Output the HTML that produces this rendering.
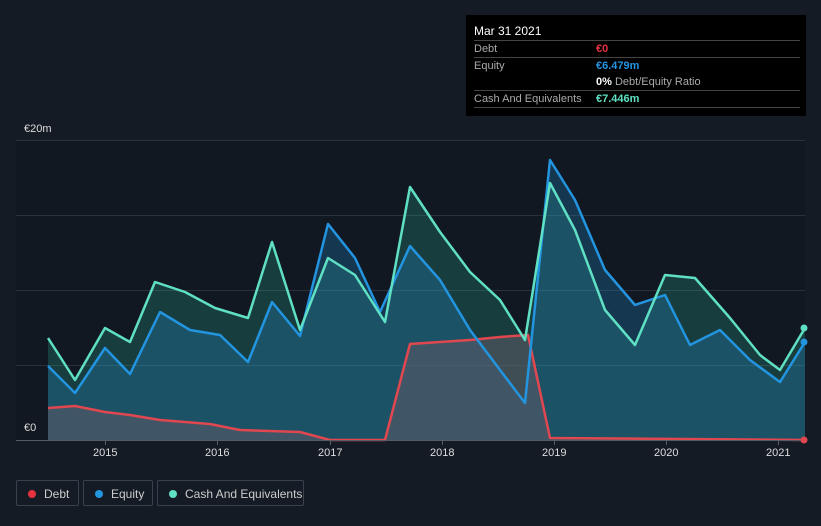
<!DOCTYPE html>
<html><head><style>
body{margin:0;width:821px;height:526px;background:#151b25;font-family:"Liberation Sans",sans-serif;overflow:hidden;position:relative}
.tt{position:absolute;left:466px;top:15px;width:340px;height:101px;background:#000;color:#fff;font-size:11px}
.tt .r{position:absolute;left:8px;right:6px;height:17px;border-top:1px solid #444;color:#aaa;line-height:17px}
.tt .v{position:absolute;left:122px;font-weight:bold}
.leg{position:absolute;top:480px;height:26px;border:1px solid #3a414c;border-radius:2px;color:#ccc;font-size:12px;line-height:26px;box-sizing:border-box;white-space:nowrap}
.leg i{position:absolute;left:11px;top:9px;width:8px;height:8px;border-radius:50%}
.leg span{position:absolute;left:27px;white-space:nowrap}
.ax{position:absolute;color:#ddd;font-size:11px}
</style></head><body>
<svg width="821" height="526" style="position:absolute;left:0;top:0">
<rect x="16" y="140" width="789" height="300" fill="#121821"/>
<g stroke="#2a313b" stroke-width="1"><line x1="16" y1="140.5" x2="805" y2="140.5"/><line x1="16" y1="215.5" x2="805" y2="215.5"/><line x1="16" y1="290.5" x2="805" y2="290.5"/><line x1="16" y1="365.5" x2="805" y2="365.5"/></g>
<polygon fill="#2ec4a8" fill-opacity="0.22" points="48,440 48,338 75,380 105,328 130,342 155,282 185,292 215,308 248,318 272,242 300,330 328,258 355,275 385,322 410,187 440,232 470,272 500,300 525,340 550,183 575,230 605,310 635,345 665,275 695,278 730,318 760,355 780,370 805,328 805,440"/>
<polygon fill="#2394df" fill-opacity="0.25" points="48,440 48,366 75,393 105,348 130,374 160,312 190,330 220,335 248,362 272,302 300,336 328,224 355,258 380,312 410,246 440,280 470,330 500,370 525,403 550,160 575,200 605,270 635,305 665,295 690,345 720,330 750,360 780,382 805,342 805,440"/>
<polygon fill="#5a5a66" fill-opacity="0.6" points="48,440 48,408 75,406 105,412 130,415 160,420 210,424 240,430 300,432 330,440 385,440 410,344 440,342 470,340 500,337 528,335 550,438 805,440"/>
<g fill="none" stroke-width="2.5" stroke-linejoin="round">
<polyline stroke="#e0474f" points="48,408 75,406 105,412 130,415 160,420 210,424 240,430 300,432 330,440 385,440 410,344 440,342 470,340 500,337 528,335 550,438 805,440"/>
<polyline stroke="#2394df" points="48,366 75,393 105,348 130,374 160,312 190,330 220,335 248,362 272,302 300,336 328,224 355,258 380,312 410,246 440,280 470,330 500,370 525,403 550,160 575,200 605,270 635,305 665,295 690,345 720,330 750,360 780,382 805,342"/>
<polyline stroke="#5fe0c4" points="48,338 75,380 105,328 130,342 155,282 185,292 215,308 248,318 272,242 300,330 328,258 355,275 385,322 410,187 440,232 470,272 500,300 525,340 550,183 575,230 605,310 635,345 665,275 695,278 730,318 760,355 780,370 805,328"/>
</g>
<line x1="16" y1="440.5" x2="805" y2="440.5" stroke="#555c66"/>
<g stroke="#555c66"><line x1="105.5" y1="440" x2="105.5" y2="445"/><line x1="217.5" y1="440" x2="217.5" y2="445"/><line x1="330.5" y1="440" x2="330.5" y2="445"/><line x1="442.5" y1="440" x2="442.5" y2="445"/><line x1="554.5" y1="440" x2="554.5" y2="445"/><line x1="666.5" y1="440" x2="666.5" y2="445"/><line x1="778.5" y1="440" x2="778.5" y2="445"/></g>
<circle cx="804" cy="328" r="3.5" fill="#5fe0c4"/><circle cx="804" cy="342" r="3.5" fill="#2394df"/><circle cx="804" cy="440" r="3.5" fill="#e0474f"/>
</svg>
<div class="ax" style="left:24px;top:123px">€20m</div>
<div class="ax" style="left:24px;top:422px">€0</div>
<div class="ax" style="left:93px;top:447px">2015</div>
<div class="ax" style="left:205px;top:447px">2016</div>
<div class="ax" style="left:318px;top:447px">2017</div>
<div class="ax" style="left:430px;top:447px">2018</div>
<div class="ax" style="left:542px;top:447px">2019</div>
<div class="ax" style="left:654px;top:447px">2020</div>
<div class="ax" style="left:766px;top:447px">2021</div>
<div class="tt">
<div style="position:absolute;left:8px;top:9px;font-size:12px">Mar 31 2021</div>
<div class="r" style="top:25px">Debt<span class="v" style="color:#e5343f">€0</span></div>
<div class="r" style="top:42px">Equity<span class="v" style="color:#2394df">€6.479m</span></div>
<div class="r" style="top:59px;border-top:none;left:130px"><b style="color:#fff">0%</b> Debt/Equity Ratio</div>
<div class="r" style="top:75px">Cash And Equivalents<span class="v" style="color:#5fe0c4">€7.446m</span></div>
<div class="r" style="top:92px;height:0"></div>
</div>
<div class="leg" style="left:16px;width:63px"><i style="background:#e5343f"></i><span>Debt</span></div>
<div class="leg" style="left:83px;width:70px"><i style="background:#2394df"></i><span>Equity</span></div>
<div class="leg" style="left:157px;width:147px"><i style="background:#5fe0c4"></i><span>Cash And Equivalents</span></div>
</body></html>
